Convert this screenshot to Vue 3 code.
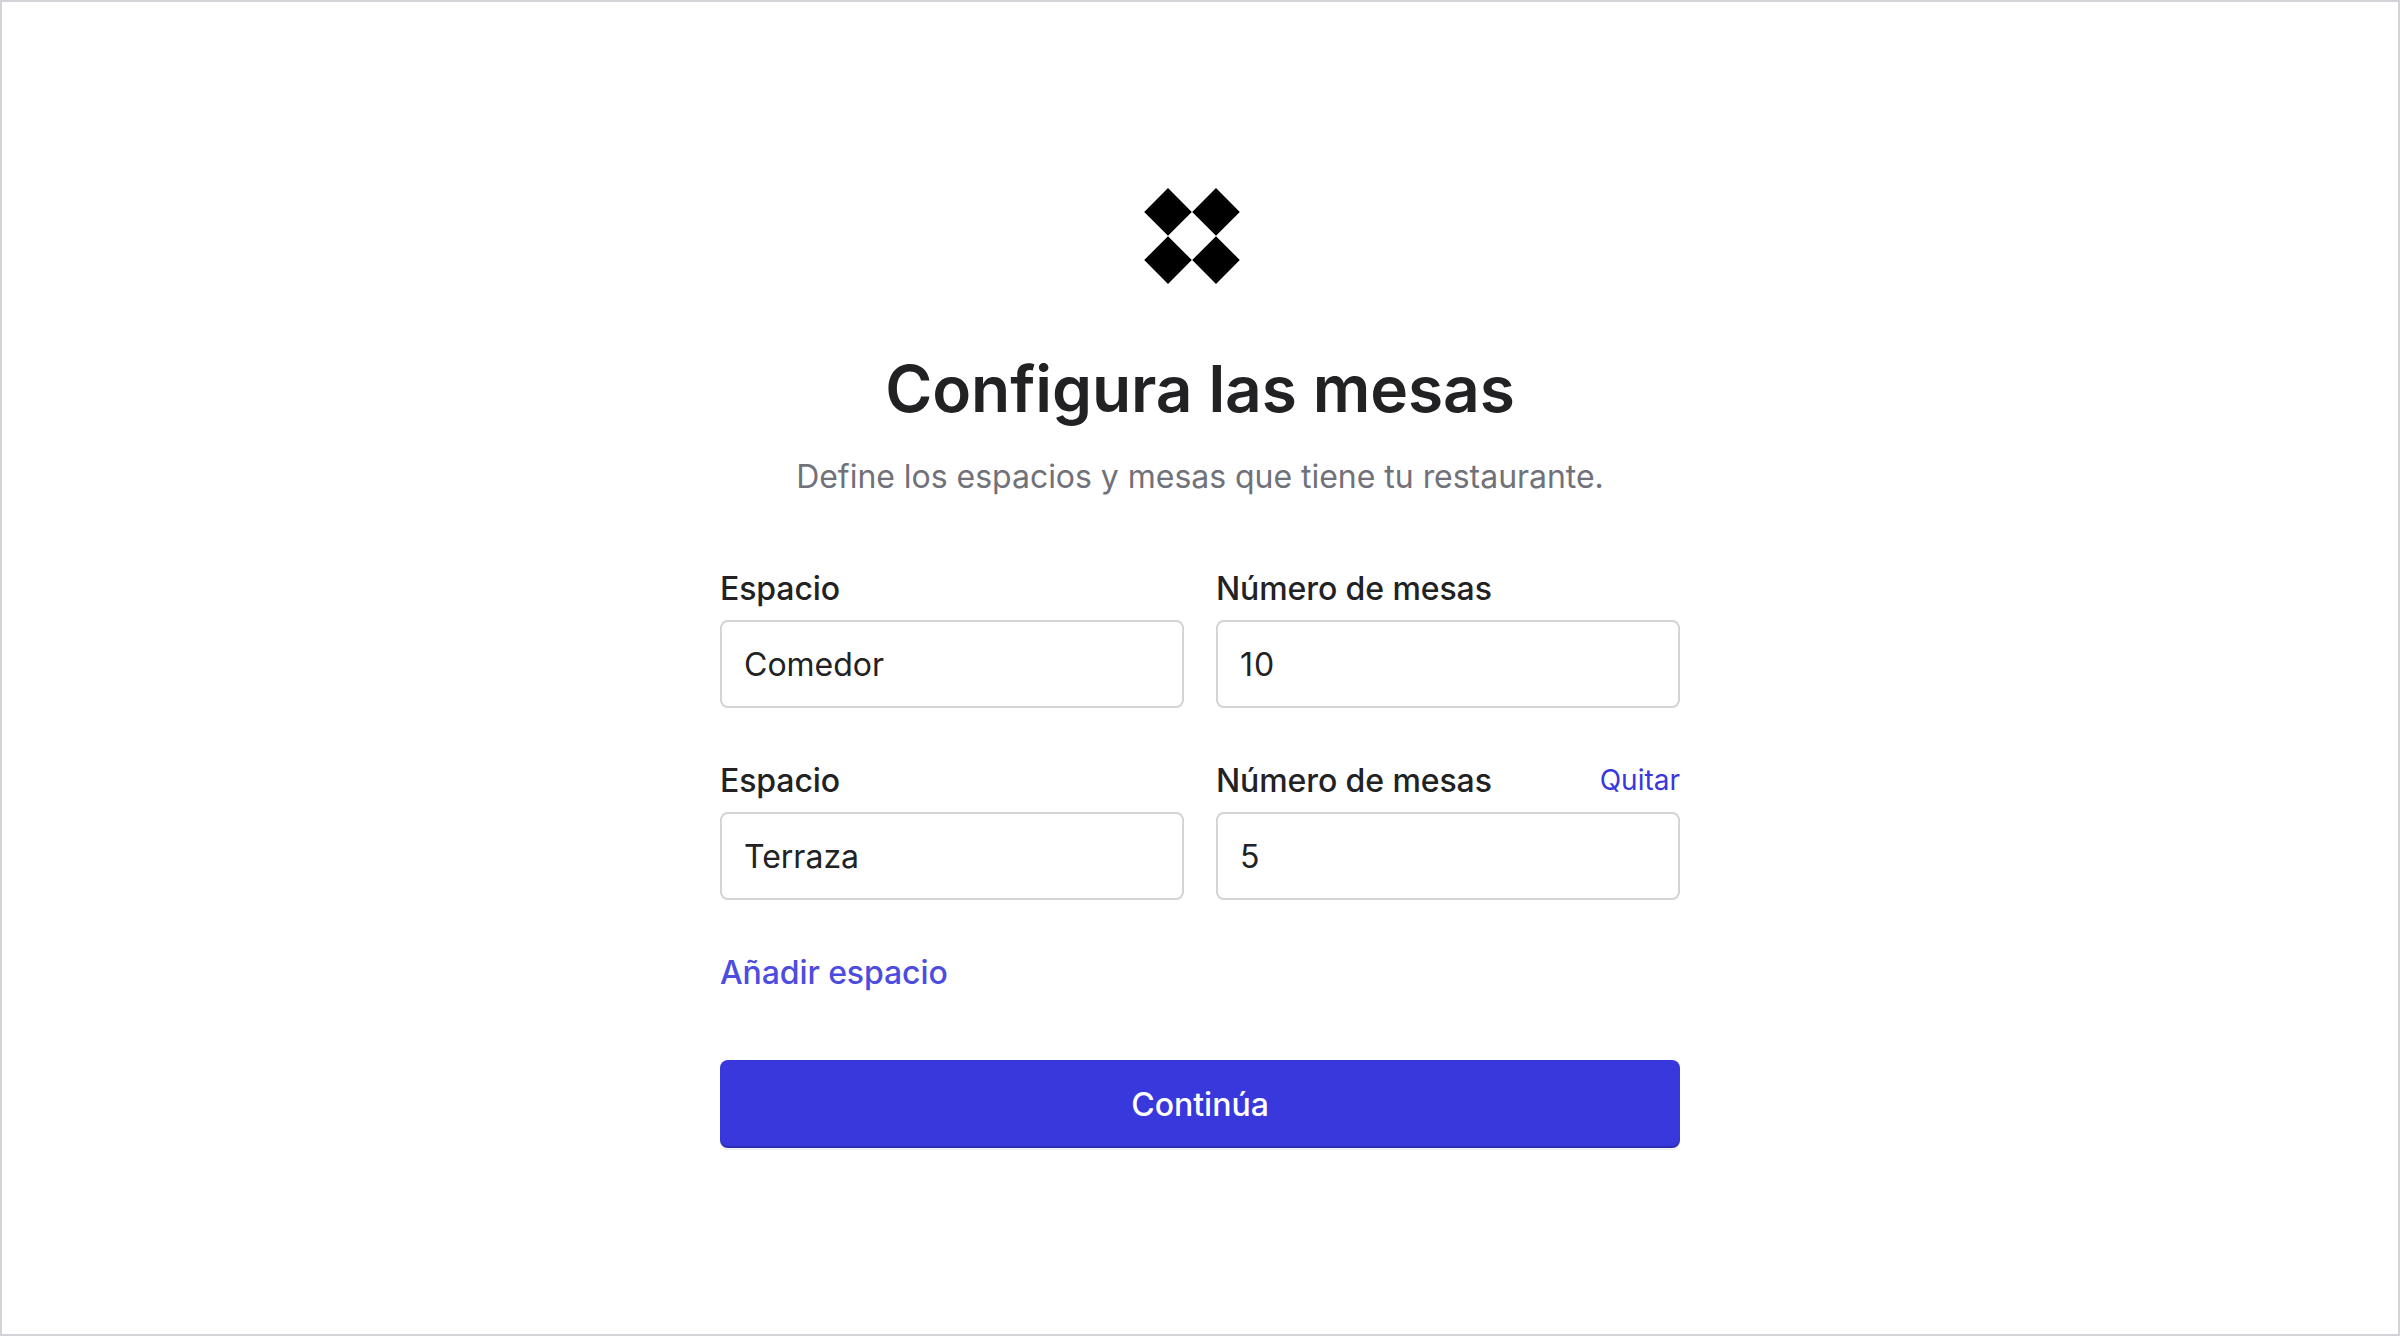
<template>
    <main class="page">
        <form class="setup" @submit.prevent>
            <svg class="logo" viewBox="0 0 96 96" aria-hidden="true" xmlns="http://www.w3.org/2000/svg">
                <path d="M24 0 47.8 24 24 47.8.2 24ZM72 0 95.8 24 72 47.8 48.2 24ZM24 48.2 47.8 72 24 96 .2 72ZM72 48.2 95.8 72 72 96 48.2 72Z" />
            </svg>

            <h1>Configura las mesas</h1>
            <p class="subtitle">Define los espacios y mesas que tiene tu restaurante.</p>

            <div class="spaces">
                <div class="space" v-for="(space, index) in spaces" :key="space.id">
                    <div class="field">
                        <label :for="`name-${space.id}`">Espacio</label>
                        <input :id="`name-${space.id}`" v-model="space.name" type="text" />
                    </div>
                    <div class="field">
                        <div class="field-head">
                            <label :for="`tables-${space.id}`">Número de mesas</label>
                            <button v-if="index > 0" class="remove" type="button" @click="removeSpace(index)">Quitar</button>
                        </div>
                        <input :id="`tables-${space.id}`" v-model="space.tables" class="tables" type="text" inputmode="numeric" />
                    </div>
                </div>
            </div>

            <button class="add" type="button" @click="addSpace">Añadir espacio</button>
            <button class="submit" type="submit">Continúa</button>
        </form>
    </main>
</template>

<script setup>
import { ref } from 'vue';

const spaces = ref([
    { id: 1, name: 'Comedor', tables: '10' },
    { id: 2, name: 'Terraza', tables: '5' }
]);

let nextId = 3;

const addSpace = () => {
    spaces.value.push({ id: nextId++, name: '', tables: '' });
};

const removeSpace = (index) => {
    spaces.value.splice(index, 1);
};
</script>

<style>
body {
    margin: 0;
    background: #fff;
}
</style>

<style scoped>
.page {
    box-sizing: border-box;
    display: flex;
    align-items: center;
    justify-content: center;
    min-height: 100vh;
    border: 2px solid #d4d4d8;
    background: #fff;
    color: #222224;
    font-family: Inter, "Liberation Sans", sans-serif;
    font-size: 32px;
    line-height: 48px;
}

.setup {
    display: flex;
    flex-direction: column;
    width: 960px;
}

.logo {
    align-self: center;
    width: 96px;
    height: 96px;
    margin: 0 16px 65px 0;
    fill: #000;
}

h1 {
    margin: 0 0 24px;
    font-size: 64px;
    font-weight: 600;
    line-height: 80px;
    letter-spacing: -0.1px;
    text-align: center;
}

.subtitle {
    margin: 0 0 63px;
    color: #71717a;
    letter-spacing: -0.03px;
    text-align: center;
}

.spaces {
    display: grid;
    gap: 48px;
    margin-bottom: 48px;
}

.space {
    display: grid;
    grid-template-columns: 1fr 1fr;
    gap: 32px;
}

.field {
    display: flex;
    flex-direction: column;
    gap: 8px;
    min-width: 0;
}

.field-head {
    display: flex;
    align-items: center;
    justify-content: space-between;
}

label {
    padding-top: 2px;
    font-weight: 500;
    line-height: 46px;
    letter-spacing: -0.1px;
}

input {
    box-sizing: border-box;
    width: 100%;
    height: 88px;
    padding: 0 22px;
    border: 2px solid #d4d4d8;
    border-radius: 8px;
    background: #fff;
    color: inherit;
    font: inherit;
    outline: none;
}

.tables {
    letter-spacing: 1px;
}

button {
    padding: 0;
    border: none;
    background: none;
    font: inherit;
    cursor: pointer;
}

.remove {
    color: #3838dc;
    font-size: 28px;
    line-height: 40px;
}

.add {
    align-self: flex-start;
    margin-bottom: 64px;
    padding-top: 2px;
    color: #4c4ce0;
    font-weight: 500;
    line-height: 46px;
    letter-spacing: -0.1px;
}

.submit {
    height: 88px;
    padding-top: 2px;
    border-radius: 8px;
    background: #3838dc;
    box-shadow: inset 0 -2px 0 rgba(0, 0, 0, 0.2), 0 2px 0 rgba(0, 0, 0, 0.06);
    color: #fff;
    font-weight: 500;
}
</style>
